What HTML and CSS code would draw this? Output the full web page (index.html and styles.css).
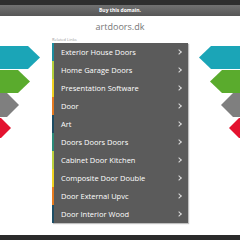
FILE: index.html
```html
<!DOCTYPE html>
<html lang="en">
<head>
  <meta charset="UTF-8" />
  <meta name="viewport" content="width=device-width, initial-scale=1.0" />
  <title>artdoors.dk</title>
  <link rel="stylesheet" href="styles.css">
</head>
<body>
  <div class="topbar"></div>
  <div class="buybar">Buy this domain.</div>

  <svg class="deco deco-left" width="48" height="100" viewBox="0 40 48 100">
    <polygon points="0,46 28,46 40,57.5 28,69 0,69" fill="#1ba5b7"/>
    <polygon points="0,70 18,70 30,81.5 18,93 0,93" fill="#5aab2d"/>
    <polygon points="0,93 7,93 19,105 7,117 0,117" fill="#7f7f7f"/>
    <polygon points="0,118 1,118 11,128 1,138 0,138" fill="#e3122f"/>
  </svg>
  <svg class="deco deco-right" width="48" height="100" viewBox="192 40 48 100">
    <polygon points="240,46 211,46 199,57.5 211,69 240,69" fill="#1ba5b7"/>
    <polygon points="240,70 222,70 210,81.5 222,93 240,93" fill="#5aab2d"/>
    <polygon points="240,93 233,93 221,105 233,117 240,117" fill="#7f7f7f"/>
    <polygon points="240,118 239,118 229,128 239,138 240,138" fill="#e3122f"/>
  </svg>

  <h1 class="domain">artdoors.dk</h1>

  <div class="links">
    <div class="links-title">Related Links</div>
    <ul class="link-list">
      <li style="border-left-color:#1c8c9e">Exterior House Doors</li>
      <li style="border-left-color:#b3cf3a">Home Garage Doors</li>
      <li style="border-left-color:#f1d222">Presentation Software</li>
      <li style="border-left-color:#e5791f">Door</li>
      <li style="border-left-color:#1d4c63">Art</li>
      <li style="border-left-color:#2b8a78">Doors Doors Doors</li>
      <li style="border-left-color:#bcd13c">Cabinet Door Kitchen</li>
      <li style="border-left-color:#f0d322">Composite Door Double</li>
      <li style="border-left-color:#e87b1e">Door External Upvc</li>
      <li style="border-left-color:#1e4e66">Door Interior Wood</li>
    </ul>
  </div>

  <div class="footer"></div>
</body>
</html>
```

FILE: styles.css
```css
html, body {
  margin: 0;
  padding: 0;
}
body {
  font-family: "Open Sans", "DejaVu Sans", sans-serif;
  background: #fff;
  width: 240px;
  height: 240px;
  position: relative;
  overflow: hidden;
}
.topbar {
  height: 5px;
  background: #2e2e2e;
}
.buybar {
  height: 11px;
  line-height: 11px;
  background: linear-gradient(#717171, #565656);
  color: #fff;
  font-size: 5px;
  font-weight: bold;
  text-align: center;
}
.deco {
  position: absolute;
  top: 40px;
}
.deco-left {
  left: 0;
}
.deco-right {
  right: 0;
}
.domain {
  margin: 4px 0 0;
  height: 14px;
  line-height: 14px;
  font-size: 9px;
  font-weight: normal;
  color: #767676;
  text-align: center;
}
.links {
  width: 136px;
  margin: 3px auto 0;
}
.links-title {
  font-size: 4px;
  line-height: 5px;
  color: #9a9a9a;
  margin-bottom: 1px;
}
.link-list {
  list-style: none;
  margin: 0;
  padding: 0;
  background: #5b5b5b;
  box-shadow: 1px 1px 1px rgba(0,0,0,0.25);
}
.link-list li {
  position: relative;
  height: 18px;
  line-height: 18px;
  border-left: 2px solid #1c8c9e;
  padding-left: 7px;
  color: #fff;
  font-size: 7.5px;
  box-sizing: border-box;
}
.link-list li::after {
  content: "";
  position: absolute;
  right: 7px;
  top: 7px;
  width: 3px;
  height: 3px;
  border-top: 1px solid #ddd;
  border-right: 1px solid #ddd;
  transform: rotate(45deg);
}
.footer {
  position: absolute;
  left: 0;
  bottom: 0;
  width: 240px;
  height: 5px;
  background: #2b2b2b;
}
```
